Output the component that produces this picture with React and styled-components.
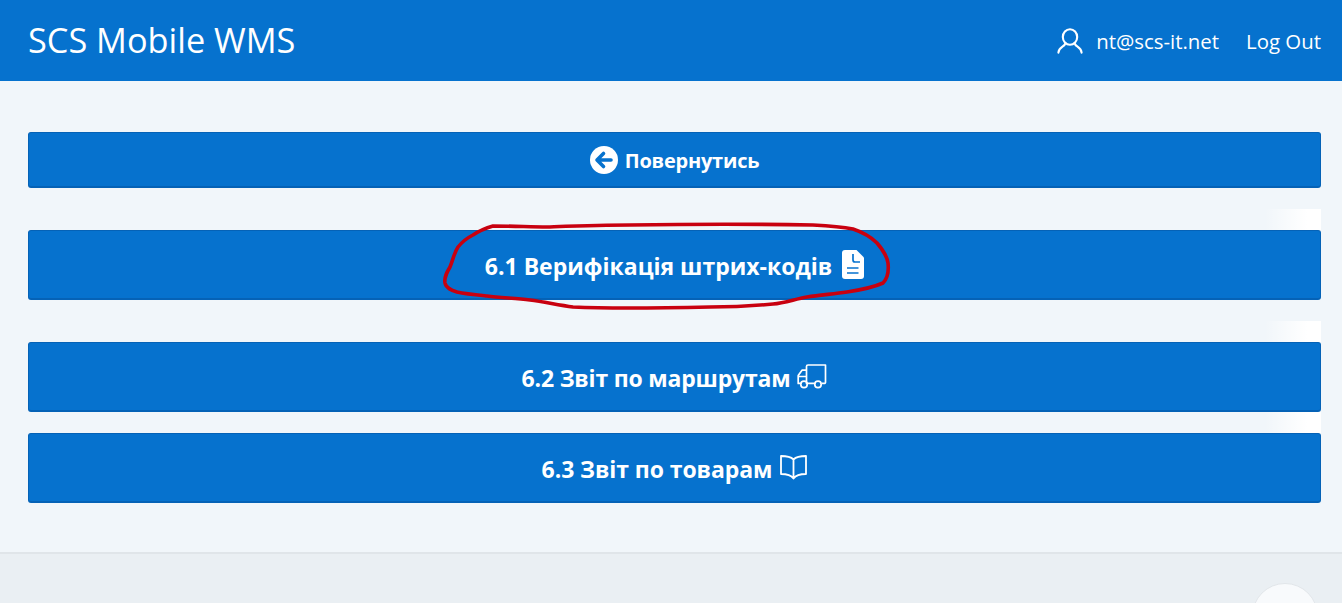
import React from 'react';
import styled, { createGlobalStyle } from 'styled-components';

const Global = createGlobalStyle`
  html, body { margin: 0; padding: 0; height: 603px; overflow: hidden; background: #f1f6fa; }
  body { font-family: "Open Sans", "Noto Sans", "Liberation Sans", sans-serif; }
`;
const Page = styled.div`
  position: relative;
  width: 1342px;
  height: 603px;
  overflow: hidden;
  display: flex;
  flex-direction: column;
`;
const Header = styled.header`
  height: 81px;
  flex: none;
  background: #0672ce;
  color: #fff;
  display: flex;
  align-items: center;
  justify-content: space-between;
  padding: 0 21px 0 28px;
`;
const Brand = styled.div`
  font-size: 34.3px;
  line-height: 1;
`;
const Nav = styled.nav`
  display: flex;
  align-items: center;
  font-size: 20.4px;
`;
const UserLink = styled.span`
  display: flex;
  align-items: center;
  gap: 13px;
  margin-right: 27px;
`;
const Main = styled.main`
  flex: none;
  height: 471px;
  box-sizing: border-box;
  padding: 51px 21px 0 28px;
  display: flex;
  flex-direction: column;
`;
const ActionButton = styled.button`
  position: relative;
  flex: none;
  height: ${p => p.$h}px;
  margin-top: ${p => p.$gap}px;
  box-sizing: border-box;
  border: 1px solid #0562b6;
  border-bottom-width: 2px;
  border-radius: 3px;
  background: #0672ce;
  color: #fff;
  font: 700 ${p => p.$size}px "Open Sans", "Noto Sans", sans-serif;
  letter-spacing: ${p => p.$spacing}px;
  display: flex;
  align-items: center;
  justify-content: center;
  gap: ${p => p.$iconGap}px;
  padding: 0;
  ${p => p.$fade && `
    &::before {
      content: "";
      position: absolute;
      top: -22px;
      right: -1px;
      width: 56px;
      height: 21px;
      background: linear-gradient(to right, rgba(255,255,255,0), #fff 75%);
    }
  `}
`;
const Label = styled.span`
  padding-top: 2px;
`;
const Footer = styled.footer`
  flex: 1;
  background: #eaeff3;
  border-top: 2px solid #e0e5e9;
`;
const ScrollTop = styled.div`
  position: absolute;
  left: 1252px;
  top: 583px;
  width: 66px;
  height: 66px;
  box-sizing: border-box;
  border-radius: 50%;
  background: #f8fafc;
  border: 1px solid #e2e6ea;
`;
const Annotation = styled.svg`
  position: absolute;
  left: 0;
  top: 0;
  pointer-events: none;
`;

const UserIcon = () => (
  <svg width="26" height="26" viewBox="0 0 26 26" fill="none" stroke="#fff" strokeWidth="2.1" strokeLinecap="round">
    <ellipse cx="13" cy="9" rx="7.2" ry="7.8" />
    <path d="M8.4 15.2C7.6 19 2 18.6 1.4 24.6M17.6 15.2C18.4 19 24 18.6 24.6 24.6" />
  </svg>
);
const BackIcon = () => (
  <svg width="28" height="28" viewBox="0 0 28 28">
    <circle cx="14" cy="14" r="14" fill="#fff" />
    <path d="M13.5 7.5L7 14l6.5 6.5M8 14h13" fill="none" stroke="#0672ce" strokeWidth="3.6" strokeLinecap="round" strokeLinejoin="round" />
  </svg>
);
const FileIcon = () => (
  <svg width="22" height="29" viewBox="0 0 22 29">
    <path d="M3 0h11.5L22 7.5V26a3 3 0 0 1-3 3H3a3 3 0 0 1-3-3V3a3 3 0 0 1 3-3z" fill="#fff" />
    <path d="M11 4v6a2 2 0 0 0 2 2h5M5 18h11.5M5 23h11.5" fill="none" stroke="#0672ce" strokeWidth="1.7" />
  </svg>
);
const TruckIcon = () => (
  <svg width="30" height="25" viewBox="0 0 30 25" fill="none" stroke="#fff" strokeWidth="1.7" strokeLinejoin="round">
    <path d="M10.4 19.4H9.5V2.5A1.5 1.5 0 0 1 11 1h17.5v17.2a1.2 1.2 0 0 1-1.2 1.2h-2.6M17.6 19.4h-7.2M3.6 19.4H1.2V11.5L5 6.2h4.5M1.2 12.5h8.3" />
    <circle cx="7" cy="20.4" r="3.2" />
    <circle cx="21" cy="20.4" r="3.2" />
  </svg>
);
const BookIcon = () => (
  <svg width="27" height="25" viewBox="0 0 27 25" fill="none" stroke="#fff" strokeWidth="1.8" strokeLinejoin="round">
    <path d="M13.5 4.5C11 2 7 1 1 1v18c6 0 10 1 12.5 4.5C16 20 20 19 26 19V1c-6 0-10 1-12.5 3.5zM13.5 4.5v19" />
  </svg>
);

const actions = [
  { id: 'back', label: 'Повернутись', before: <BackIcon />, h: 56, gap: 0, size: 20, spacing: -0.22, iconGap: 7 },
  { id: 'a', label: '6.1 Верифікація штрих-кодів', after: <FileIcon />, h: 70, gap: 42, size: 23, spacing: 0, iconGap: 10, fade: true },
  { id: 'b', label: '6.2 Звіт по маршрутам', after: <TruckIcon />, h: 70, gap: 42, size: 23, spacing: -0.2, iconGap: 7, fade: true },
  { id: 'c', label: '6.3 Звіт по товарам', after: <BookIcon />, h: 70, gap: 21, size: 23, spacing: -0.08, iconGap: 8, fade: true },
];

export default function App() {
  return (
    <Page>
      <Global />
      <Header>
        <Brand>SCS Mobile WMS</Brand>
        <Nav>
          <UserLink><UserIcon />nt@scs-it.net</UserLink>
          <span>Log Out</span>
        </Nav>
      </Header>
      <Main>
        {actions.map(a => (
          <ActionButton key={a.id} $h={a.h} $gap={a.gap} $size={a.size} $spacing={a.spacing} $iconGap={a.iconGap} $fade={a.fade}>
            {a.before}
            <Label>{a.label}</Label>
            {a.after}
          </ActionButton>
        ))}
      </Main>
      <Footer />
      <ScrollTop />
      <Annotation width="1342" height="603" viewBox="0 0 1342 603" fill="none">
        <path
          d="M493 226C515 226 530 227 547 227C575 226 600 225 630 225C690 224 760 224 813 225C830 226 842 227 853 229C862 232 870 236 877 243C883 250 887 256 888 263C889 272 888 278 883 283C872 288 860 290 847 292C833 294 820 295 807 297C795 299 785 303 773 304C752 306 730 307 710 307C665 308 615 309 573 307C558 305 545 302 530 300C515 298 500 298 487 296C477 295 466 294 457 292C451 290 446 288 445 283C444 277 447 272 450 267C453 260 454 253 458 247C462 242 467 238 473 235C479 231 486 228 493 226Z"
          stroke="#c8000f"
          strokeWidth="3.6"
        />
      </Annotation>
    </Page>
  );
}
